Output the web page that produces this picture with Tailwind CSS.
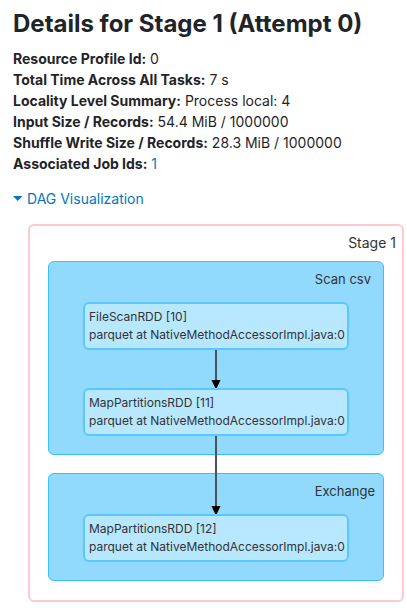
<!DOCTYPE html>
<html lang="en">
<head>
<meta charset="utf-8">
<meta name="viewport" content="width=device-width, initial-scale=1">
<title>Details for Stage 1 (Attempt 0)</title>
<script src="https://cdn.jsdelivr.net/npm/@tailwindcss/browser@4"></script>
</head>
<body class="bg-white font-['Inter',sans-serif] text-sm leading-[21px] text-[#1f2428]">
<main class="pt-2 pb-2">
  <h1 class="pl-[13px] text-2xl leading-8 font-bold whitespace-nowrap">Details for Stage 1 (Attempt 0)</h1>
  <ul class="mt-2 pl-[13px]">
    <li><strong>Resource Profile Id:</strong> 0</li>
    <li><strong>Total Time Across All Tasks:</strong> 7 s</li>
    <li><strong>Locality Level Summary:</strong> Process local: 4</li>
    <li><strong>Input Size / Records:</strong> 54.4 MiB / 1000000</li>
    <li><strong>Shuffle Write Size / Records:</strong> 28.3 MiB / 1000000</li>
    <li><strong>Associated Job Ids:</strong> <a href="#job-1" class="text-[#0078c0]">1</a></li>
  </ul>
  <button type="button" aria-expanded="true" aria-controls="dag" class="mt-3.5 ml-[13px] flex items-center gap-1 text-[#0078c0]">
    <svg class="h-[5px] w-2.5" viewBox="0 0 10 5" fill="currentColor" aria-hidden="true"><path d="M0 0H9.5L4.75 5Z"/></svg>
    DAG Visualization
  </button>
  <section id="dag" class="mt-[15px] mr-[3px] ml-7 rounded-md border-2 border-[#ffc9d4] px-[18px] pb-[19px] text-[#333]">
    <h2 class="-mr-3 h-[35px] pt-1.5 text-right">Stage 1</h2>
    <div class="rounded-md border border-[#3abefc] bg-[#91dafe] px-[34px] pb-[18px]">
      <h3 class="-mr-[22px] h-10 pt-[7px] text-right text-[13px]">Scan csv</h3>
      <div class="h-12 rounded-md border-2 border-[#5ac8fd] bg-[#b8e8ff] px-1 pt-1 text-xs leading-[18px] whitespace-nowrap">
        <p>FileScanRDD [10]</p>
        <p>parquet at NativeMethodAccessorImpl.java:0</p>
      </div>
      <svg class="mx-auto block h-[38px] w-2.5" viewBox="0 0 10 38" aria-hidden="true"><path d="M5 0V32" stroke="#4b5358" stroke-width="2"/><path d="M0.5 30H9.5L5.8 38H4.2Z" fill="#000"/></svg>
      <div class="relative h-12 rounded-md border-2 border-[#5ac8fd] bg-[#b8e8ff] px-1 pt-1 text-xs leading-[18px] whitespace-nowrap">
        <p>MapPartitionsRDD [11]</p>
        <p>parquet at NativeMethodAccessorImpl.java:0</p>
        <svg class="absolute inset-x-0 top-[46px] z-10 mx-auto h-[78px] w-2.5" viewBox="0 0 10 78" aria-hidden="true"><path d="M5 0V72" stroke="#4b5358" stroke-width="2"/><path d="M0.5 70H9.5L5.8 78H4.2Z" fill="#000"/></svg>
      </div>
    </div>
    <div class="mt-[18px] rounded-md border border-[#3abefc] bg-[#91dafe] px-[34px] pb-[18px]">
      <h3 class="-mr-[26px] h-10 pt-[7px] text-right text-[13px]">Exchange</h3>
      <div class="h-12 rounded-md border-2 border-[#5ac8fd] bg-[#b8e8ff] px-1 pt-1 text-xs leading-[18px] whitespace-nowrap">
        <p>MapPartitionsRDD [12]</p>
        <p>parquet at NativeMethodAccessorImpl.java:0</p>
      </div>
    </div>
  </section>
</main>
</body>
</html>
